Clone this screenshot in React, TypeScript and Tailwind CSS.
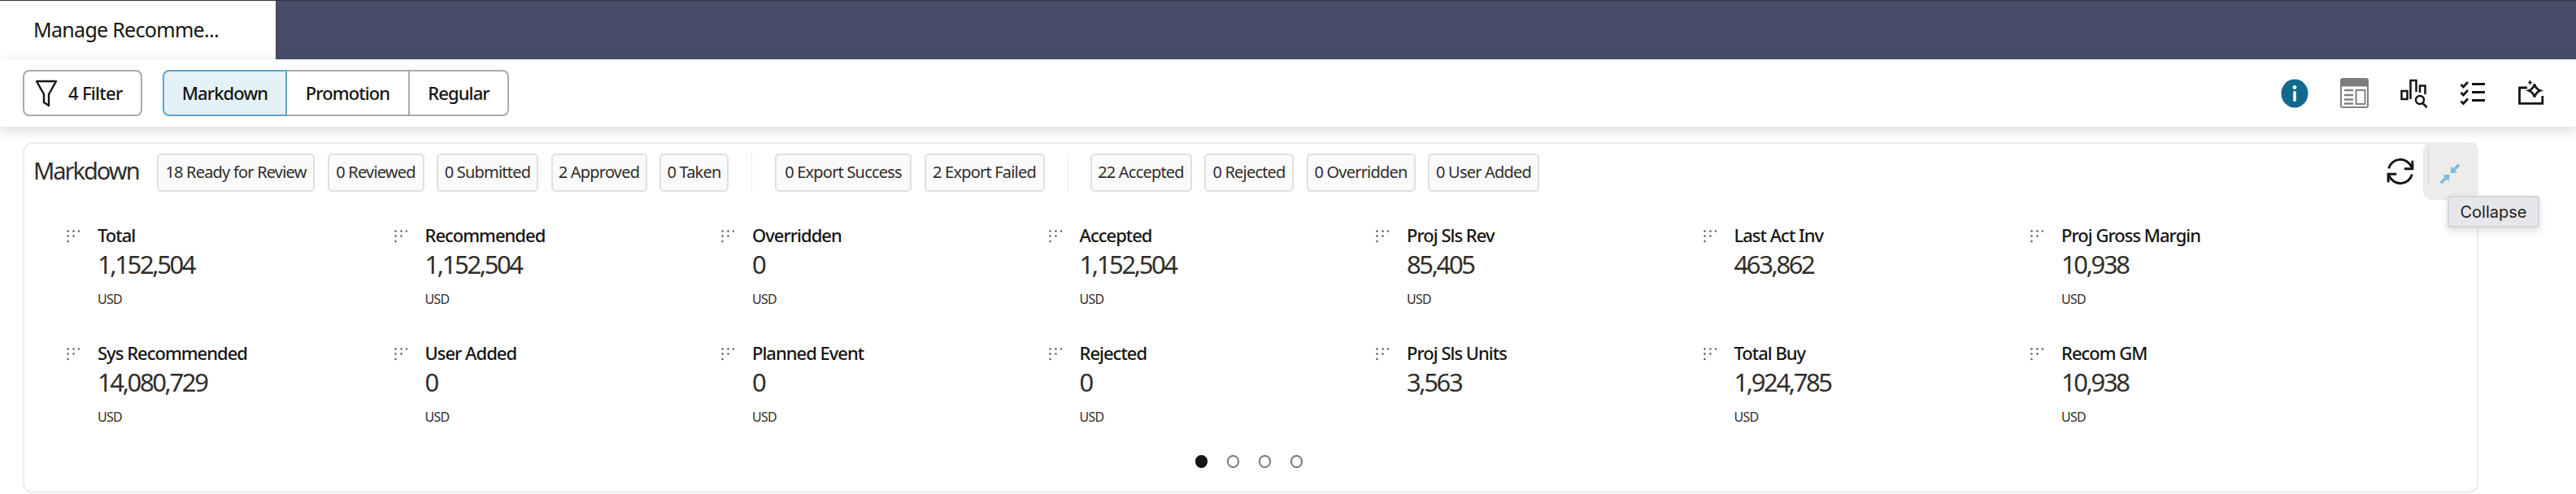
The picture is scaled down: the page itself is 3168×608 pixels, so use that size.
const badgesA = [
  ["18 Ready for Review", "w-[194px]"],
  ["0 Reviewed", "w-[119px]"],
  ["0 Submitted", "w-[125px]"],
  ["2 Approved", "w-[118px]"],
  ["0 Taken", "w-[85px]"],
];
const badgesB = [
  ["0 Export Success", "w-[168px]"],
  ["2 Export Failed", "w-[148px]"],
];
const badgesC = [
  ["22 Accepted", "w-[125px]"],
  ["0 Rejected", "w-[110px]"],
  ["0 Overridden", "w-[134px]"],
  ["0 User Added", "w-[137px]"],
];

const kpis = [
  ["Total", "1,152,504", true],
  ["Recommended", "1,152,504", true],
  ["Overridden", "0", true],
  ["Accepted", "1,152,504", true],
  ["Proj Sls Rev", "85,405", true],
  ["Last Act Inv", "463,862", false],
  ["Proj Gross Margin", "10,938", true],
  ["Sys Recommended", "14,080,729", true],
  ["User Added", "0", true],
  ["Planned Event", "0", true],
  ["Rejected", "0", true],
  ["Proj Sls Units", "3,563", false],
  ["Total Buy", "1,924,785", true],
  ["Recom GM", "10,938", true],
] as const;

function Badge({ text, w }: { text: string; w: string }) {
  return (
    <div className={`${w} h-[47px] flex items-center justify-center rounded-[5px] border-2 border-[#e0e0e0] bg-[#fafafa] text-[20px] text-[#302d2a] tracking-[-0.8px] whitespace-nowrap`}>
      {text}
    </div>
  );
}

function Handle() {
  return (
    <svg width="16" height="16" viewBox="0 0 16 16" className="shrink-0 text-[#555]" fill="currentColor">
      <circle cx="1.5" cy="1.5" r="1.2" />
      <circle cx="8.5" cy="1.5" r="1.2" />
      <circle cx="15" cy="1.5" r="1.2" />
      <circle cx="1.5" cy="7.5" r="1.2" />
      <circle cx="8.5" cy="7.5" r="1.2" />
      <circle cx="1.5" cy="14" r="1.2" />
    </svg>
  );
}

function Kpi({ label, value, usd }: { label: string; value: string; usd: boolean }) {
  return (
    <div className="h-[145px] flex">
      <div className="w-[38px] pt-[6px]">
        <Handle />
      </div>
      <div className="flex flex-col -mt-[2px]">
        <div className="h-[28px] leading-[28px] text-[22px] font-medium text-[#161513] tracking-[-1px]">{label}</div>
        <div className="h-[44px] leading-[44px] text-[31px] font-normal text-[#312d2a] tracking-[-2.4px]">{value}</div>
        {usd && <div className="mt-[11px] h-[20px] leading-[20px] text-[16px] text-[#312d2a] tracking-[-0.7px]">USD</div>}
      </div>
    </div>
  );
}

function InfoIcon() {
  return (
    <svg width="34" height="36" viewBox="0 0 34 36">
      <ellipse cx="17" cy="18" rx="16.5" ry="17.5" fill="#13688f" />
      <circle cx="17" cy="10.5" r="2.4" fill="#fff" />
      <rect x="15.2" y="15" width="3.6" height="13" rx="1.6" fill="#fff" />
    </svg>
  );
}
function TableIcon() {
  return (
    <svg width="35" height="37" viewBox="0 0 35 37">
      <rect x="1" y="1" width="33" height="35" rx="2" fill="#fff" stroke="#828282" strokeWidth="2" />
      <path d="M1 3a2 2 0 0 1 2-2h29a2 2 0 0 1 2 2v7H1z" fill="#7d7d7d" stroke="#7d7d7d" />
      <path d="M5 15h11M5 21h11M5 26.500h11M5 31.500h11" stroke="#828282" strokeWidth="2.400" />
      <rect x="19.500" y="15" width="11" height="17" fill="none" stroke="#828282" strokeWidth="2" />
    </svg>
  );
}
function ChartIcon() {
  return (
    <svg width="33" height="36" viewBox="0 0 33 36" fill="none" stroke="#161513" strokeWidth="2.500">
      <rect x="1.500" y="15" width="7" height="10" />
      <path d="M12.500 25V2h7v14" />
      <path d="M24 17V8.500h6.500V19" />
      <circle cx="24" cy="26" r="5" />
      <path d="M27.500 30l4.500 4.500" strokeLinecap="round" />
    </svg>
  );
}
function ChecksIcon() {
  return (
    <svg width="32" height="32" viewBox="0 0 32 32" fill="none" stroke="#161513" strokeWidth="2.800">
      <path d="M1.500 5l3 3 5.500-6M1.500 15l3 3 5.500-6M1.500 25.500l3 3 5.500-6" />
      <path d="M15 4.500h16M15 14.500h16M15 24.500h16" />
    </svg>
  );
}
function SparkIcon() {
  return (
    <svg width="33" height="33" viewBox="0 -3 33 33" fill="none" stroke="#161513" strokeWidth="2.800">
      <path d="M11 7H1.500v19.300h28.300V17" />
      <path d="M20 2.500c1 4 3 6.500 7 8-4 1.500-6 4-7 8-1-4-3-6.500-7-8 4-1.500 6-4 7-8z" />
      <path d="M14.500 -3c.4 2 1.200 3 3 3.500-1.800.5-2.600 1.500-3 3.500-.4-2-1.200-3-3-3.500 1.800-.5 2.600-1.500 3-3.500z" fill="#161513" stroke="none" />
    </svg>
  );
}
function RefreshIcon() {
  return (
    <svg width="34" height="34" viewBox="0 0 32 32" fill="none" stroke="#161513" strokeWidth="2.800">
      <path d="M2.500 12.500A14 14 0 0 1 29 11" />
      <path d="M30 3.500V13H20.500" />
      <path d="M29.500 19.500A14 14 0 0 1 3 21" />
      <path d="M2 28.500V19H11.500" />
    </svg>
  );
}
function CollapseIcon() {
  return (
    <svg width="26" height="26" viewBox="0 0 26 26" fill="#7fbcdc">
      <path d="M23 .5l2.500 2.500-6 6 2.500 2.500-8.500.8.800-8.500 2.500 2.500z" />
      <path d="M3 25.500L.5 23l6-6L4 14.500l8.500-.8-.8 8.500L9.200 19.500z" />
    </svg>
  );
}

export default function App() {
  return (
    <div className="relative w-full h-[608px] overflow-hidden bg-white font-['Noto_Sans',sans-serif] text-[#161513]">
      <header className="h-[73px] border-t border-t-[#33363f] bg-[#474d68] flex">
        <div className="w-[339px] bg-white pl-[41px] flex items-center text-[25px] text-[#161513] tracking-[-0.7px] whitespace-nowrap">
          Manage Recomme...
        </div>
      </header>

      <section className="relative z-10 h-[83px] bg-white shadow-[0_4px_14px_rgba(0,0,0,0.16)] flex items-center pl-[28px] pr-[38px]">
        <button className="w-[147px] h-[57px] rounded-[8px] border-2 border-[#a9a9a9] flex items-center pl-[13px] gap-[13px] text-[22px] font-medium tracking-[-0.7px]">
          <svg width="28" height="36" viewBox="0 0 28 36" fill="none" stroke="#161513" strokeWidth="2.400">
            <path d="M2 3h24L17 19v14l-6-4V19z" strokeLinejoin="round" />
          </svg>
          4 Filter
        </button>
        <div className="ml-[25px] flex h-[57px] text-[22px] font-medium tracking-[-0.9px]">
          <div className="w-[153px] rounded-l-[8px] border-2 border-[#5aa6c9] bg-[#e4f1f7] flex items-center justify-center">Markdown</div>
          <div className="w-[151px] border-y-2 border-r-2 border-[#a9a9a9] flex items-center justify-center">Promotion</div>
          <div className="w-[122px] rounded-r-[8px] border-y-2 border-r-2 border-[#a9a9a9] flex items-center justify-center">Regular</div>
        </div>
        <div className="ml-auto flex items-center">
          <InfoIcon />
          <div className="ml-[39px]"><TableIcon /></div>
          <div className="ml-[39px]"><ChartIcon /></div>
          <div className="ml-[40px]"><ChecksIcon /></div>
          <div className="ml-[40px]"><SparkIcon /></div>
        </div>
      </section>

      <main className="pl-[28px] pt-[19px]">
        <div className="relative w-[3020px] h-[432px] rounded-[12px] border-2 border-[#ececec] bg-white">
          <div className="flex items-center h-[94px] pl-[11px] pb-[24px]">
            <h2 className="w-[152px] -mt-[5px] text-[29px] text-[#312d2a] font-normal tracking-[-2px] leading-none">Markdown</h2>
            <div className="flex gap-[15.5px]">
              {badgesA.map(([t, w]) => <Badge key={t} text={t} w={w} />)}
            </div>
            <div className="mx-[28px] w-px h-[47px] bg-[#e8e8e8]" />
            <div className="flex gap-[15.5px]">
              {badgesB.map(([t, w]) => <Badge key={t} text={t} w={w} />)}
            </div>
            <div className="ml-[28px] mr-[27px] w-px h-[47px] bg-[#e8e8e8]" />
            <div className="flex gap-[15.5px]">
              {badgesC.map(([t, w]) => <Badge key={t} text={t} w={w} />)}
            </div>
            <div className="ml-auto mr-[77px] -mt-[3px]"><RefreshIcon /></div>
          </div>

          <div className="pl-[52px] pt-[6px] grid grid-cols-[repeat(7,402.5px)]">
            {kpis.map(([l, v, u]) => <Kpi key={l} label={l} value={v} usd={u} />)}
          </div>

          <div className="absolute left-0 right-0 top-[383px] flex justify-center gap-[24px] pr-[4px]">
            <span className="w-[15px] h-[16px] rounded-full bg-[#161513]" />
            <span className="w-[15px] h-[16px] rounded-full border-2 border-[#777]" />
            <span className="w-[15px] h-[16px] rounded-full border-2 border-[#777]" />
            <span className="w-[15px] h-[16px] rounded-full border-2 border-[#777]" />
          </div>

          <div className="absolute -top-[2px] -right-[2px] w-[68px] h-[71px] rounded-[10px] bg-[#ecedeb] flex items-center justify-center pt-[6px] pr-[3px]">
            <div className="absolute left-[6px] top-[6px] w-[1px] h-[46px] bg-[#d2d2d0]" />
            <CollapseIcon />
          </div>
          <div className="absolute left-[2980px] top-[64px] w-[113px] h-[39px] rounded-[3px] border-2 border-[#d3d5d8] bg-[#e5e7ea] shadow-[0_4px_10px_rgba(0,0,0,0.14)] flex items-center justify-center font-['Inter',sans-serif] text-[20px] text-[#222]">
            Collapse
          </div>
        </div>
      </main>
    </div>
  );
}
